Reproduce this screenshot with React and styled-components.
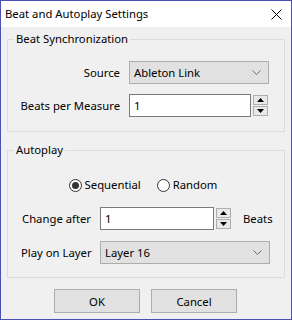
import React from "react";
import styled, { createGlobalStyle } from "styled-components";

const FS = "11.3px";

const Global = createGlobalStyle`
  html, body { margin: 0; padding: 0; background: #ffffff; }
  body { font-family: "Noto Sans", "DejaVu Sans", sans-serif; font-size: ${FS}; color: #000; }
  * { box-sizing: border-box; }
`;

const Window = styled.div`
  width: 292px;
  height: 320px;
  border: 1px solid #4d50b0;
  background: #f0f0f0;
  display: flex;
  flex-direction: column;
`;

const TitleBar = styled.div`
  height: 26px;
  background: #ffffff;
  display: flex;
  align-items: center;
  justify-content: space-between;
  padding: 0 9px 0 4px;
`;

const TitleText = styled.span`
  font-size: ${FS};
  line-height: 16px;
`;

const Body = styled.div`
  padding: 4px 6px 0 6px;
  display: flex;
  flex-direction: column;
`;

const Group = styled.fieldset`
  margin: ${(p) => p.$mt || 0}px 0 0 0;
  border: 1px solid #dcdcdc;
  padding: ${(p) => p.$pt}px 0 ${(p) => p.$pb}px 0;
  min-width: 0;
`;

const Legend = styled.legend`
  padding: 0 2px;
  margin-left: 6px;
  line-height: 16px;
  font-size: ${FS};
`;

const FormGrid = styled.div`
  display: grid;
  grid-template-columns: ${(p) => p.$cols};
  column-gap: ${(p) => p.$colGap}px;
  row-gap: ${(p) => p.$rowGap}px;
  align-items: center;
`;

const Label = styled.span`
  text-align: ${(p) => p.$align || "left"};
  padding-left: ${(p) => p.$pl || 0}px;
  line-height: 16px;
  white-space: nowrap;
`;

const Combo = styled.div`
  width: ${(p) => p.$w}px;
  height: 23px;
  background: #e1e1e1;
  border: 1px solid #adadad;
  display: flex;
  align-items: center;
  justify-content: space-between;
  padding: 0 7px 0 4px;
`;

const FieldRow = styled.div`
  display: flex;
  align-items: center;
`;

const TextInput = styled.div`
  width: ${(p) => p.$w}px;
  height: 23px;
  background: #ffffff;
  border: 1px solid #7a7a7a;
  display: flex;
  align-items: center;
  padding-left: 4px;
`;

const Spinner = styled.div`
  margin-left: 2px;
  display: flex;
  flex-direction: column;
  gap: 1px;
`;

const SpinButton = styled.div`
  width: 15px;
  height: 10px;
  background: #e9e9e9;
  border: 1px solid #adadad;
  display: flex;
  align-items: center;
  justify-content: center;
`;

const Suffix = styled.span`
  margin-left: 12px;
  line-height: 16px;
`;

const RadioRow = styled.div`
  display: flex;
  justify-content: center;
  gap: 16px;
  padding-right: 6px;
  margin-bottom: 14px;
`;

const RadioItem = styled.label`
  display: flex;
  align-items: center;
  gap: 3px;
  line-height: 16px;
`;

const RadioCircle = styled.span`
  width: 13px;
  height: 13px;
  border-radius: 50%;
  border: 1px solid #333333;
  background: #ffffff;
  display: flex;
  align-items: center;
  justify-content: center;
  &::after {
    content: "";
    width: 7px;
    height: 7px;
    border-radius: 50%;
    background: ${(p) => (p.$checked ? "#333333" : "transparent")};
  }
`;

const ButtonRow = styled.div`
  display: flex;
  justify-content: center;
  gap: 11px;
  margin-top: 11px;
  padding-right: 1px;
`;

const Button = styled.button`
  width: 86px;
  height: 24px;
  background: #e1e1e1;
  border: 1px solid #adadad;
  font-family: inherit;
  font-size: ${FS};
  color: #000;
  padding: 0;
`;

const Chevron = () => (
  <svg width="9" height="5" viewBox="0 0 9 5">
    <polyline points="0.5,0.5 4.5,4.5 8.5,0.5" fill="none" stroke="#6d6d6d" strokeWidth="1" />
  </svg>
);

const Arrow = ({ up }) => (
  <svg width="7" height="4" viewBox="0 0 7 4">
    <polygon points={up ? "0,4 7,4 3.5,0" : "0,0 7,0 3.5,4"} fill="#000" />
  </svg>
);

const CloseIcon = () => (
  <svg width="11" height="11" viewBox="0 0 11 11">
    <path d="M0.5 0.5 L10.5 10.5 M10.5 0.5 L0.5 10.5" stroke="#000" strokeWidth="1" />
  </svg>
);

const NumberField = ({ w, value }) => (
  <FieldRow>
    <TextInput $w={w}>{value}</TextInput>
    <Spinner>
      <SpinButton><Arrow up /></SpinButton>
      <SpinButton><Arrow /></SpinButton>
    </Spinner>
  </FieldRow>
);

export default function App() {
  return (
    <>
      <Global />
      <Window>
        <TitleBar>
          <TitleText>Beat and Autoplay Settings</TitleText>
          <CloseIcon />
        </TitleBar>
        <Body>
          <Group $pt={14} $pb={14}>
            <Legend>Beat Synchronization</Legend>
            <FormGrid $cols="112px auto" $colGap={9} $rowGap={10}>
              <Label $align="right">Source</Label>
              <Combo $w={140}>
                <span>Ableton Link</span>
                <Chevron />
              </Combo>
              <Label $align="right">Beats per Measure</Label>
              <NumberField w={122} value="1" />
            </FormGrid>
          </Group>
          <Group $mt={10} $pt={19} $pb={13}>
            <Legend>Autoplay</Legend>
            <RadioRow>
              <RadioItem>
                <RadioCircle $checked />
                Sequential
              </RadioItem>
              <RadioItem>
                <RadioCircle />
                Random
              </RadioItem>
            </RadioRow>
            <FormGrid $cols="92px auto" $colGap={0} $rowGap={11}>
              <Label $pl={14}>Change after</Label>
              <FieldRow>
                <NumberField w={114} value="1" />
                <Suffix>Beats</Suffix>
              </FieldRow>
              <Label $pl={13}>Play on Layer</Label>
              <Combo $w={170}>
                <span>Layer 16</span>
                <Chevron />
              </Combo>
            </FormGrid>
          </Group>
          <ButtonRow>
            <Button>OK</Button>
            <Button>Cancel</Button>
          </ButtonRow>
        </Body>
      </Window>
    </>
  );
}
